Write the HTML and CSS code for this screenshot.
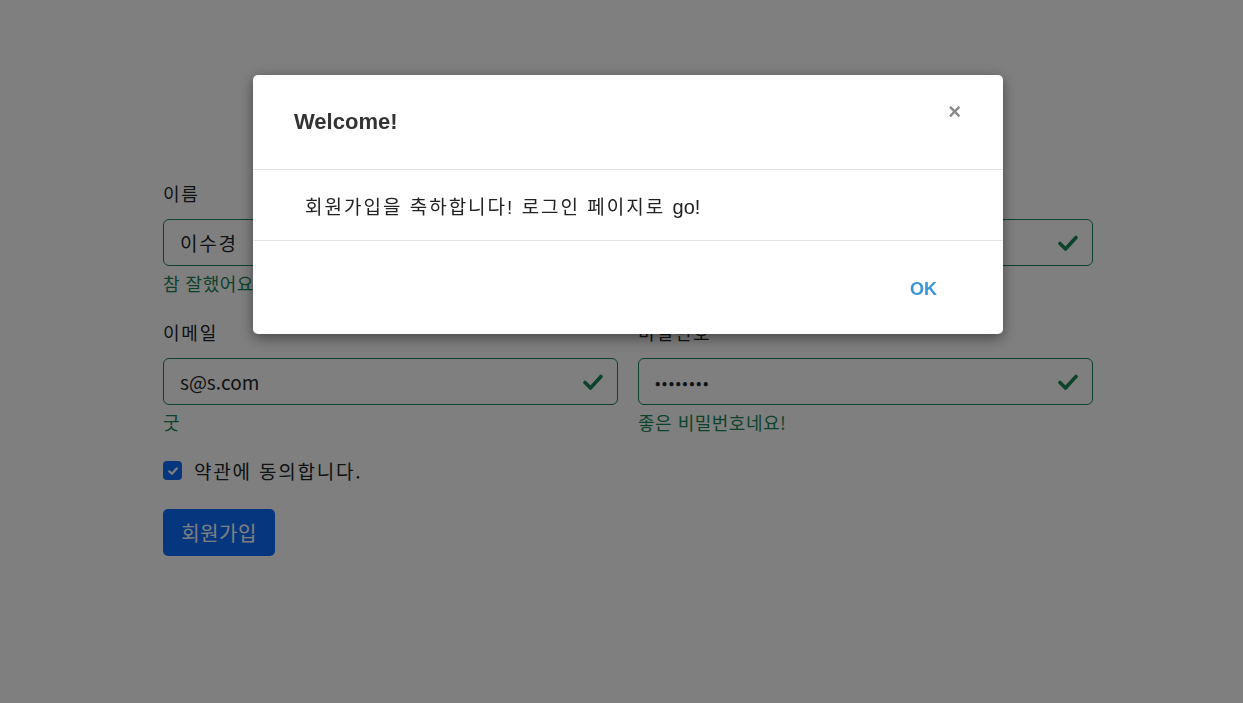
FILE: index.html
```html
<!DOCTYPE html>
<html lang="ko">
<head>
<meta charset="utf-8">
<title>회원가입</title>
<link rel="stylesheet" href="styles.css">
</head>
<body>
<main class="page">
  <form class="form">
    <div class="grid">
      <div class="field">
        <label class="label">이름</label>
        <div class="control">
          <input class="input ko" type="text" value="이수경">
          <svg class="ok" viewBox="0 0 20 16" width="20" height="16"><path d="M2 8.5 L7.5 14 L18 2.5" fill="none" stroke="#198754" stroke-width="3.6" stroke-linecap="round" stroke-linejoin="round"/></svg>
        </div>
        <div class="feedback">참 잘했어요!</div>
      </div>
      <div class="field">
        <label class="label">아이디</label>
        <div class="control">
          <input class="input" type="text" value="sukyung">
          <svg class="ok" viewBox="0 0 20 16" width="20" height="16"><path d="M2 8.5 L7.5 14 L18 2.5" fill="none" stroke="#198754" stroke-width="3.6" stroke-linecap="round" stroke-linejoin="round"/></svg>
        </div>
        <div class="feedback">좋은 아이디네요!</div>
      </div>
      <div class="field">
        <label class="label">이메일</label>
        <div class="control">
          <input class="input" type="text" value="s@s.com">
          <svg class="ok" viewBox="0 0 20 16" width="20" height="16"><path d="M2 8.5 L7.5 14 L18 2.5" fill="none" stroke="#198754" stroke-width="3.6" stroke-linecap="round" stroke-linejoin="round"/></svg>
        </div>
        <div class="feedback">굿</div>
      </div>
      <div class="field">
        <label class="label">비밀번호</label>
        <div class="control">
          <input class="input pw" type="password" value="12345678">
          <svg class="ok" viewBox="0 0 20 16" width="20" height="16"><path d="M2 8.5 L7.5 14 L18 2.5" fill="none" stroke="#198754" stroke-width="3.6" stroke-linecap="round" stroke-linejoin="round"/></svg>
        </div>
        <div class="feedback">좋은 비밀번호네요!</div>
      </div>
    </div>
    <div class="check">
      <span class="box"><svg viewBox="0 0 12 12" width="12" height="12"><path d="M2.2 6.3 L4.9 8.8 L9.8 3.4" fill="none" stroke="#fff" stroke-width="2.2" stroke-linecap="round" stroke-linejoin="round"/></svg></span>
      <span class="check-text">약관에 동의합니다.</span>
    </div>
    <button class="submit" type="button">회원가입</button>
  </form>
</main>

<div class="overlay">
  <div class="modal">
    <div class="modal-header">
      <h2 class="title">Welcome!</h2>
      <span class="close">×</span>
    </div>
    <div class="modal-body"><span>회원가입을 축하합니다! 로그인 페이지로 <span class="latin">go!</span></span></div>
    <div class="modal-footer">
      <button class="ok-btn" type="button">OK</button>
    </div>
  </div>
</div>
</body>
</html>
```

FILE: styles.css
```css
* { box-sizing: border-box; }
html, body { margin: 0; padding: 0; }
body {
  background: #fff;
  font-family: "Noto Sans CJK KR", "Noto Sans", sans-serif;
  color: #212529;
  width: 1243px;
  height: 703px;
  overflow: hidden;
}
.page {
  padding: 180px 0 0 163px;
}
.form { width: 930px; }
.grid {
  display: grid;
  grid-template-columns: 1fr 1fr;
  column-gap: 20px;
  row-gap: 22px;
}
.field { display: flex; flex-direction: column; }
.label {
  font-size: 18px;
  line-height: 27px;
  letter-spacing: 1.8px;
  margin-bottom: 12px;
}
.control {
  display: flex;
  align-items: center;
  height: 47px;
  border: 1px solid #198754;
  border-radius: 6px;
  padding: 0 14px 0 16px;
  background: #fff;
}
.input {
  flex: 1;
  border: 0;
  outline: 0;
  background: transparent;
  font-family: "Noto Sans CJK KR", "Noto Sans", sans-serif;
  font-size: 19px;
  color: #212529;
  padding: 0;
  min-width: 0;
}
.input.ko { letter-spacing: 1.8px; }
.input.pw { letter-spacing: 1.4px; font-size: 16px; }
.ok { flex: none; }
.feedback {
  margin-top: 4px;
  font-size: 18px;
  line-height: 27px;
  letter-spacing: 0.5px;
  color: #198754;
}
.check {
  display: flex;
  align-items: center;
  margin-top: 21px;
  height: 27px;
}
.box {
  width: 19px;
  height: 19px;
  border-radius: 4px;
  background: #0d6efd;
  display: flex;
  align-items: center;
  justify-content: center;
  margin-right: 12px;
}
.check-text { font-size: 19px; line-height: 27px; letter-spacing: 1.8px; }
.submit {
  margin-top: 25px;
  width: 112px;
  height: 47px;
  border: 0;
  border-radius: 5px;
  background: #0d6efd;
  color: #fff;
  font-family: "Noto Sans CJK KR", sans-serif;
  font-size: 20px;
  letter-spacing: 0.5px;
  padding: 0;
}
.overlay {
  position: fixed;
  inset: 0;
  background: rgba(0, 0, 0, 0.5);
}
.modal {
  position: absolute;
  left: 253px;
  top: 75px;
  width: 750px;
  background: #fff;
  border-radius: 5px;
  box-shadow: 0 4px 14px rgba(0, 0, 0, 0.45);
  font-family: "Liberation Sans", "Noto Sans CJK KR", sans-serif;
}
.modal-header {
  height: 95px;
  display: flex;
  align-items: center;
  justify-content: space-between;
  padding: 0 41px;
  border-bottom: 1px solid #e5e5e5;
}
.title {
  margin: 0;
  font-size: 22px;
  font-weight: bold;
  color: #333;
}
.close {
  align-self: flex-start;
  margin-top: 22px;
  margin-right: 1px;
  font-size: 22px;
  line-height: 30px;
  font-weight: bold;
  color: #8a8a8a;
}
.modal-body {
  height: 71px;
  display: flex;
  align-items: center;
  padding: 0 52px;
  font-size: 19px;
  letter-spacing: 2px;
  color: #222;
  border-bottom: 1px solid #e5e5e5;
}
.latin { letter-spacing: 0; font-size: 20px; }
.modal-footer {
  height: 93px;
  display: flex;
  align-items: center;
  justify-content: flex-end;
  padding: 4px 66px 0 0;
}
.ok-btn {
  border: 0;
  background: transparent;
  padding: 0;
  font-family: "Liberation Sans", sans-serif;
  font-weight: bold;
  font-size: 18px;
  color: #3a95d6;
}
```
